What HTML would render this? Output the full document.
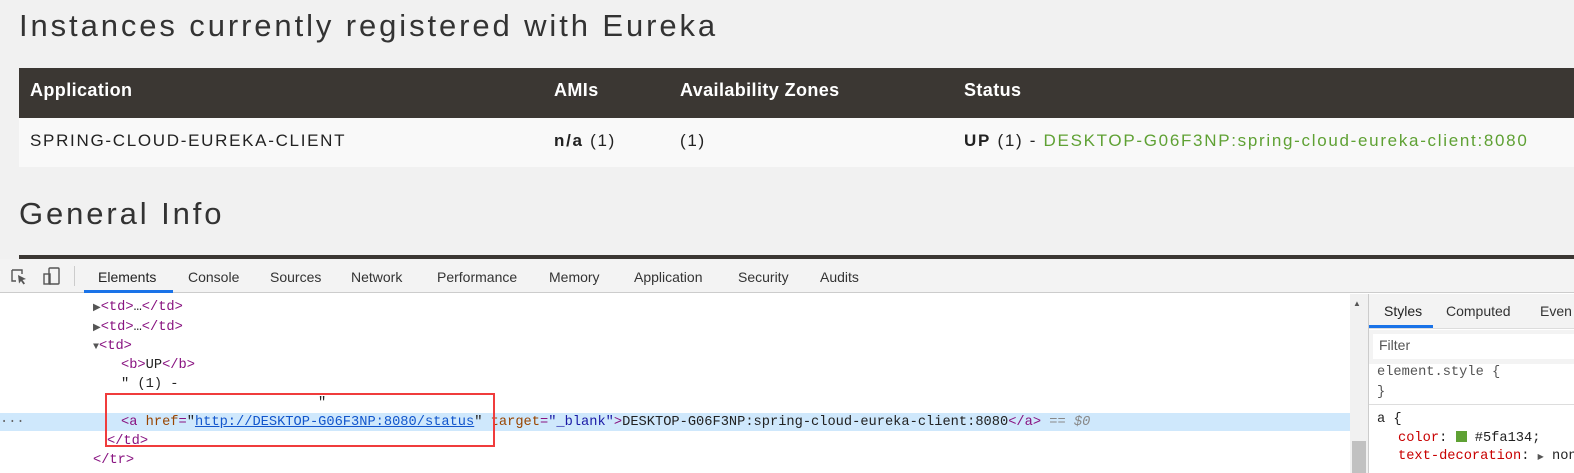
<!DOCTYPE html>
<html><head><meta charset="utf-8"><style>
*{margin:0;padding:0;box-sizing:border-box}
body{width:1574px;height:473px;overflow:hidden;background:#f1f1f1;font-family:"Liberation Sans",sans-serif;position:relative}
.abs{position:absolute;white-space:nowrap}
h1{position:absolute;left:19px;top:8px;font-size:31px;font-weight:normal;color:#333;letter-spacing:2.9px}
.th{position:absolute;left:19px;top:68px;width:1555px;height:50px;background:#3b3733}
.tr{position:absolute;left:19px;top:118px;width:1555px;height:49px;background:#f9f9f9}
.hd{color:#fff;font-weight:bold;font-size:18px;top:80px;letter-spacing:0.4px}
.cd{color:#222;font-size:17px;top:131px;letter-spacing:1.7px}
.dev{position:absolute;left:0;top:259px;width:1574px;height:214px;background:#fff}
.tb{position:absolute;left:0;top:0;width:1574px;height:34px;background:#f3f3f3;border-bottom:1px solid #ccc}
.tab{position:absolute;top:10px;font-size:14px;color:#333}
.mono{font-family:"Liberation Mono",monospace;font-size:13.7px;color:#222}
.tag{color:#881280}.an{color:#994500}.av{color:#1a1aa6}
</style></head><body>
<h1>Instances currently registered with Eureka</h1>
<div class="th"></div><div class="tr"></div>
<div class="abs hd" style="left:30px">Application</div>
<div class="abs hd" style="left:554px">AMIs</div>
<div class="abs hd" style="left:680px">Availability Zones</div>
<div class="abs hd" style="left:964px">Status</div>
<div class="abs cd" style="left:30px">SPRING-CLOUD-EUREKA-CLIENT</div>
<div class="abs cd" style="left:554px"><b>n/a</b> (1)</div>
<div class="abs cd" style="left:680px">(1)</div>
<div class="abs cd" style="left:964px"><b>UP</b> (1) - <span style="color:#5fa134">DESKTOP-G06F3NP:spring-cloud-eureka-client:8080</span></div>
<h1 style="top:196px">General Info</h1>
<div style="position:absolute;left:19px;top:255px;width:1555px;height:4px;background:#3b3733"></div>
<div class="dev">
 <div class="tb">
  <svg class="abs" style="left:10px;top:9px" width="18" height="18" viewBox="0 0 18 18"><path d="M2 2h10v4M2 2v11h4" fill="none" stroke="#555" stroke-width="1.4"/><path d="M8 7l8 4-3.5 1 2.5 3.5-1.5 1-2.5-3.5-2 2.5z" fill="#555"/></svg>
  <svg class="abs" style="left:42px;top:7px" width="20" height="20" viewBox="0 0 20 20"><rect x="7" y="2" width="10" height="16" rx="1" fill="none" stroke="#555" stroke-width="1.4"/><rect x="2" y="8" width="6" height="10" fill="none" stroke="#555" stroke-width="1.4"/></svg>
  <div class="abs" style="left:74px;top:7px;width:1px;height:20px;background:#ccc"></div>
  <div class="tab" style="left:98px;color:#222">Elements</div>
  <div class="abs" style="left:84px;top:31px;width:89px;height:3px;background:#1a73e8"></div>
  <div class="tab" style="left:188px">Console</div>
  <div class="tab" style="left:270px">Sources</div>
  <div class="tab" style="left:351px">Network</div>
  <div class="tab" style="left:437px">Performance</div>
  <div class="tab" style="left:549px">Memory</div>
  <div class="tab" style="left:634px">Application</div>
  <div class="tab" style="left:738px">Security</div>
  <div class="tab" style="left:820px">Audits</div>
 </div>
 <div class="abs" style="left:0;top:154px;width:1350px;height:18px;background:#cfe8fc"></div>
 <div class="abs mono" style="left:0;top:156px;color:#666">&middot;&middot;&middot;</div>
 <div class="abs mono" style="left:93px;top:41px"><span style="font-size:10px;color:#555">▶</span><span class="tag">&lt;td&gt;</span>…<span class="tag">&lt;/td&gt;</span></div>
 <div class="abs mono" style="left:93px;top:61px"><span style="font-size:10px;color:#555">▶</span><span class="tag">&lt;td&gt;</span>…<span class="tag">&lt;/td&gt;</span></div>
 <div class="abs mono" style="left:93px;top:80px"><span style="font-size:10px;color:#555">▼</span><span class="tag">&lt;td&gt;</span></div>
 <div class="abs mono" style="left:121px;top:99px"><span class="tag">&lt;b&gt;</span>UP<span class="tag">&lt;/b&gt;</span></div>
 <div class="abs mono" style="left:121px;top:118px">" (1) -</div>
 <div class="abs mono" style="left:318px;top:137px">"</div>
 <div class="abs mono" style="left:121px;top:156px"><span class="tag">&lt;a</span> <span class="an">href</span><span class="tag">=</span>"<span style="text-decoration:underline;color:#1155cc">http://DESKTOP-G06F3NP:8080/status</span>" <span class="an">target</span><span class="tag">=</span><span class="av">"_blank"</span><span class="tag">&gt;</span>DESKTOP-G06F3NP:spring-cloud-eureka-client:8080<span class="tag">&lt;/a&gt;</span> <span style="color:#888;font-style:italic">== $0</span></div>
 <div class="abs mono" style="left:107px;top:175px"><span class="tag">&lt;/td&gt;</span></div>
 <div class="abs mono" style="left:93px;top:194px"><span class="tag">&lt;/tr&gt;</span></div>
 <div class="abs" style="left:105px;top:134px;width:390px;height:54px;border:2px solid #f03c3c"></div>
 <div class="abs" style="left:1350px;top:35px;width:18px;height:179px;background:#f1f1f1"></div>
 <div class="abs" style="left:1353px;top:40px;font-size:8px;color:#555">▲</div>
 <div class="abs" style="left:1352px;top:182px;width:14px;height:32px;background:#c1c1c1"></div>
 <div class="abs" style="left:1368px;top:35px;width:206px;height:179px;background:#fff;border-left:1px solid #ccc"></div>
 <div class="abs" style="left:1369px;top:35px;width:205px;height:35px;background:#f3f3f3;border-bottom:1px solid #ddd"></div>
 <div class="abs" style="left:1384px;top:44px;font-size:14px;color:#222">Styles</div>
 <div class="abs" style="left:1369px;top:66px;width:64px;height:3px;background:#1a73e8"></div>
 <div class="abs" style="left:1446px;top:44px;font-size:14px;color:#333">Computed</div>
 <div class="abs" style="left:1540px;top:44px;font-size:14px;color:#333">Even</div>
 <div class="abs" style="left:1369px;top:71px;width:205px;height:34px;background:#f3f3f3"></div>
 <div class="abs" style="left:1373px;top:75px;width:201px;height:25px;background:#fff"></div>
 <div class="abs" style="left:1379px;top:78px;font-size:14px;color:#555">Filter</div>
 <div class="abs mono" style="left:1377px;top:106px;color:#555">element.style {</div>
 <div class="abs mono" style="left:1377px;top:126px;color:#555">}</div>
 <div class="abs" style="left:1369px;top:145px;width:205px;height:1px;background:#ddd"></div>
 <div class="abs mono" style="left:1377px;top:153px">a {</div>
 <div class="abs mono" style="left:1398px;top:172px"><span style="color:#c80000">color</span>: <span style="display:inline-block;width:11px;height:11px;background:#5fa134;vertical-align:-1px"></span> #5fa134;</div>
 <div class="abs mono" style="left:1398px;top:190px"><span style="color:#c80000">text-decoration</span>: <span style="font-size:8px;color:#555">▶</span> non</div>
</div>
</body></html>
